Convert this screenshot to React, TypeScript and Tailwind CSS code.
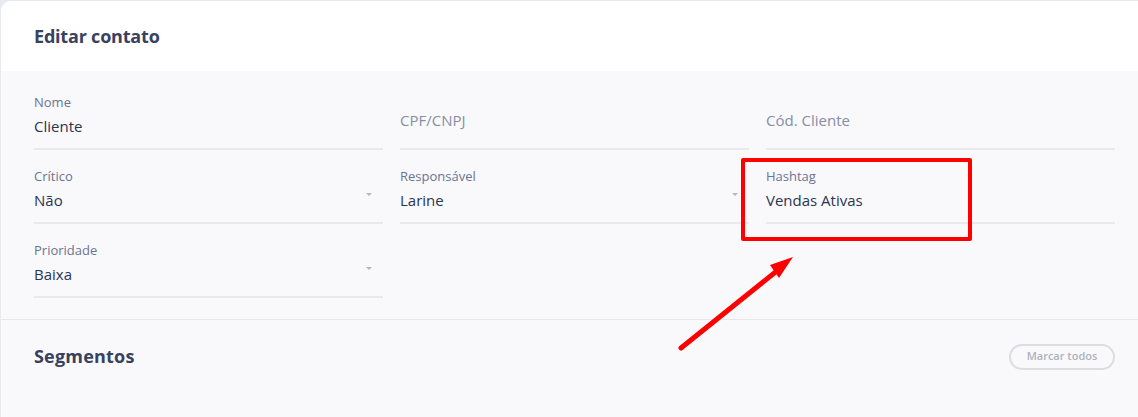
import React from "react";

type Field = {
  label: string;
  value?: string;
  select?: boolean;
};

const rows: (Field | null)[][] = [
  [
    { label: "Nome", value: "Cliente" },
    { label: "CPF/CNPJ" },
    { label: "Cód. Cliente" },
  ],
  [
    { label: "Crítico", value: "Não", select: true },
    { label: "Responsável", value: "Larine", select: true },
    { label: "Hashtag", value: "Vendas Ativas" },
  ],
  [{ label: "Prioridade", value: "Baixa", select: true }, null, null],
];

const FieldBox: React.FC<{ field: Field }> = ({ field }) => {
  return (
    <div className="relative h-[56px] border-b-2 border-[#e8e9ee] box-border">
      {field.value ? (
        <>
          <div className="text-[13px] leading-[16px] text-[#6b7390]">{field.label}</div>
          <div className="mt-[5px] text-[15px] leading-[22px] text-[#2c3450]">{field.value}</div>
        </>
      ) : (
        <div className="pt-[15px] text-[15px] leading-[22px] text-[#878ea3]">{field.label}</div>
      )}
      {field.select && (
        <span className="absolute right-[11px] top-[25px] w-0 h-0 border-l-[3px] border-r-[3px] border-t-[3px] border-l-transparent border-r-transparent border-t-[#b3b6c0]" />
      )}
    </div>
  );
};

const App: React.FC = () => {
  return (
    <div
      className="relative w-[1138px] h-[417px] overflow-hidden bg-[#e8eaef] pt-px pl-px"
      style={{ fontFamily: '"Open Sans", "Noto Sans", sans-serif' }}
    >
      <div className="h-full rounded-tl-[10px] overflow-hidden bg-[#f9f9fc]">
        {/* header */}
        <div className="h-[70px] bg-white flex items-center px-[33px]">
          <h1 className="text-[18px] font-bold text-[#38425f] tracking-[-0.2px]">Editar contato</h1>
        </div>

        {/* form */}
        <div className="pl-[33px] pr-[23px] pt-[23px] pb-[21px] grid grid-cols-3 gap-x-[17px] gap-y-[18px]">
          {rows.flat().map((f, i) =>
            f ? <FieldBox key={i} field={f} /> : <div key={i} />
          )}
        </div>

        <div className="border-t border-[#e6e7ec]" />

        {/* segmentos */}
        <div className="pl-[33px] pr-[23px] pt-[23px] flex items-center justify-between">
          <h2 className="text-[18px] font-bold text-[#38425f] tracking-[0.2px]">Segmentos</h2>
          <button className="h-[26px] w-[106px] rounded-full border-2 border-[#dcdde3] text-[11px] font-semibold text-[#aeb1bd]">
            Marcar todos
          </button>
        </div>
      </div>

      {/* annotation */}
      <div className="absolute left-[741px] top-[158px] w-[231px] h-[83px] border-4 border-[#ff0000] rounded-[2px]" />
      <svg className="absolute left-0 top-0" width="1138" height="417" viewBox="0 0 1138 417">
        <line x1="681" y1="348" x2="778" y2="270" stroke="#ff0000" strokeWidth="5" strokeLinecap="round" />
        <polygon points="793,257 770,265 779,278" fill="#ff0000" />
      </svg>
    </div>
  );
};

export default App;
